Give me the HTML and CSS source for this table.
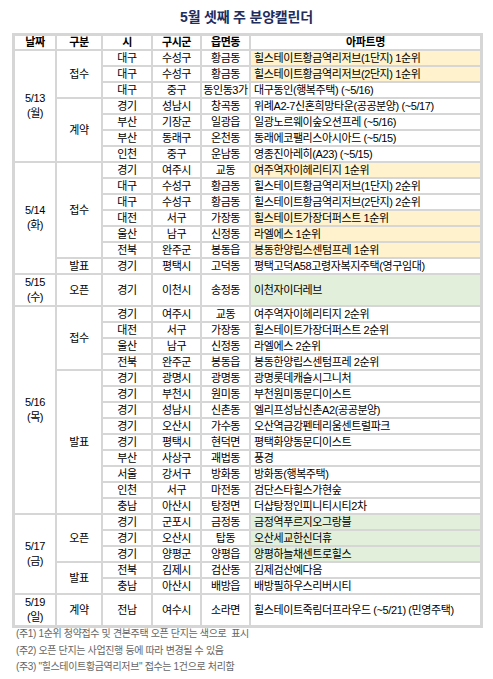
FILE: index.html
```html
<!DOCTYPE html>
<html lang="ko">
<head>
<meta charset="utf-8">
<title>5월 셋째 주 분양캘린더</title>
<link rel="stylesheet" href="styles.css">
</head>
<body>
<h1 class="title">5월 셋째 주 분양캘린더</h1>
<table class="cal">
<colgroup>
<col class="c-date"><col class="c-kind"><col class="c-si"><col class="c-gu"><col class="c-dong"><col class="c-name">
</colgroup>
<thead>
<tr><th>날짜</th><th>구분</th><th>시</th><th>구시군</th><th>읍면동</th><th>아파트명</th></tr>
</thead>
<tbody>
<tr><td class="date" rowspan="7">5/13<br>(월)</td><td rowspan="3">접수</td><td>대구</td><td>수성구</td><td>황금동</td><td class="name y">힐스테이트황금역리저브(1단지) 1순위</td></tr>
<tr><td>대구</td><td>수성구</td><td>황금동</td><td class="name y">힐스테이트황금역리저브(2단지) 1순위</td></tr>
<tr><td>대구</td><td>중구</td><td>동인동3가</td><td class="name">대구동인(행복주택) (~5/16)</td></tr>
<tr><td rowspan="4">계약</td><td>경기</td><td>성남시</td><td>창곡동</td><td class="name">위례A2-7신혼희망타운(공공분양) (~5/17)</td></tr>
<tr><td>부산</td><td>기장군</td><td>일광읍</td><td class="name">일광노르웨이숲오션프레 (~5/16)</td></tr>
<tr><td>부산</td><td>동래구</td><td>온천동</td><td class="name">동래에코팰리스아시아드 (~5/15)</td></tr>
<tr><td>인천</td><td>중구</td><td>운남동</td><td class="name">영종진아레히(A23) (~5/15)</td></tr>

<tr><td class="date" rowspan="7">5/14<br>(화)</td><td rowspan="6">접수</td><td>경기</td><td>여주시</td><td>교동</td><td class="name y">여주역자이헤리티지 1순위</td></tr>
<tr><td>대구</td><td>수성구</td><td>황금동</td><td class="name">힐스테이트황금역리저브(1단지) 2순위</td></tr>
<tr><td>대구</td><td>수성구</td><td>황금동</td><td class="name">힐스테이트황금역리저브(2단지) 2순위</td></tr>
<tr><td>대전</td><td>서구</td><td>가장동</td><td class="name y">힐스테이트가장더퍼스트 1순위</td></tr>
<tr><td>울산</td><td>남구</td><td>신정동</td><td class="name y">라엘에스 1순위</td></tr>
<tr><td>전북</td><td>완주군</td><td>봉동읍</td><td class="name y">봉동한양립스센텀프레 1순위</td></tr>
<tr><td>발표</td><td>경기</td><td>평택시</td><td>고덕동</td><td class="name">평택고덕A58고령자복지주택(영구임대)</td></tr>

<tr><td class="date">5/15<br>(수)</td><td>오픈</td><td>경기</td><td>이천시</td><td>송정동</td><td class="name g">이천자이더레브</td></tr>

<tr><td class="date" rowspan="13">5/16<br>(목)</td><td rowspan="4">접수</td><td>경기</td><td>여주시</td><td>교동</td><td class="name">여주역자이헤리티지 2순위</td></tr>
<tr><td>대전</td><td>서구</td><td>가장동</td><td class="name">힐스테이트가장더퍼스트 2순위</td></tr>
<tr><td>울산</td><td>남구</td><td>신정동</td><td class="name">라엘에스 2순위</td></tr>
<tr><td>전북</td><td>완주군</td><td>봉동읍</td><td class="name">봉동한양립스센텀프레 2순위</td></tr>
<tr><td rowspan="9">발표</td><td>경기</td><td>광명시</td><td>광명동</td><td class="name">광명롯데캐슬시그니처</td></tr>
<tr><td>경기</td><td>부천시</td><td>원미동</td><td class="name">부천원미동문디이스트</td></tr>
<tr><td>경기</td><td>성남시</td><td>신촌동</td><td class="name">엘리프성남신촌A2(공공분양)</td></tr>
<tr><td>경기</td><td>오산시</td><td>가수동</td><td class="name">오산역금강펜테리움센트럴파크</td></tr>
<tr><td>경기</td><td>평택시</td><td>현덕면</td><td class="name">평택화양동문디이스트</td></tr>
<tr><td>부산</td><td>사상구</td><td>괘법동</td><td class="name">풍경</td></tr>
<tr><td>서울</td><td>강서구</td><td>방화동</td><td class="name">방화동(행복주택)</td></tr>
<tr><td>인천</td><td>서구</td><td>마전동</td><td class="name">검단스타힐스가현숲</td></tr>
<tr><td>충남</td><td>아산시</td><td>탕정면</td><td class="name">더샵탕정인피니티시티2차</td></tr>

<tr><td class="date" rowspan="5">5/17<br>(금)</td><td rowspan="3">오픈</td><td>경기</td><td>군포시</td><td>금정동</td><td class="name g">금정역푸르지오그랑블</td></tr>
<tr><td>경기</td><td>오산시</td><td>탑동</td><td class="name g">오산세교한신더휴</td></tr>
<tr><td>경기</td><td>양평군</td><td>양평읍</td><td class="name g">양평하늘채센트로힐스</td></tr>
<tr><td rowspan="2">발표</td><td>전북</td><td>김제시</td><td>검산동</td><td class="name">김제검산예다음</td></tr>
<tr><td>충남</td><td>아산시</td><td>배방읍</td><td class="name">배방필하우스리버시티</td></tr>

<tr><td class="date">5/19<br>(일)</td><td>계약</td><td>전남</td><td>여수시</td><td>소라면</td><td class="name">힐스테이트죽림더프라우드 (~5/21) (민영주택)</td></tr>
</tbody>
</table>
<div class="notes">
<p>(주1) 1순위 청약접수 및 견본주택 오픈 단지는 색으로&nbsp; 표시</p>
<p>(주2) 오픈 단지는 사업진행 등에 따라 변경될 수 있음</p>
<p>(주3) "힐스테이트황금역리저브" 접수는 1건으로 처리함</p>
</div>
</body>
</html>
```
FILE: styles.css
```css
html, body {
  margin: 0;
  padding: 0;
  background: #ffffff;
}
body {
  font-family: "Liberation Sans", "Noto Sans CJK KR", sans-serif;
  color: #000;
}
.title {
  margin: 7px 0 6px;
  text-align: center;
  font-size: 14px;
  line-height: 20px;
  font-weight: 700;
  color: #1f2d5c;
  letter-spacing: -0.2px;
}
.cal {
  margin-left: 12px;
  width: 471px;
  table-layout: fixed;
  border-collapse: separate;
  border-spacing: 2px;
  border: 1px solid #d6d6d6;
  background: #d6d6d6;
  font-size: 11px;
  letter-spacing: -0.4px;
}
.c-date { width: 40px; }
.c-kind { width: 44px; }
.c-si { width: 48px; }
.c-gu { width: 47px; }
.c-dong { width: 47px; }
.cal th,
.cal td {
  background: #fff;
  padding: 0;
  height: 14px;
  line-height: 14px;
  text-align: center;
  vertical-align: middle;
  white-space: nowrap;
  overflow: hidden;
}
.cal th {
  height: 13px;
  line-height: 13px;
  font-weight: 700;
}
.cal td.date {
  line-height: 15px;
}
.cal td.name {
  text-align: left;
  padding-left: 3px;
}
.cal td.y { background: #fff2cc; }
.cal td.g { background: #e2efda; }
.notes {
  margin: 0 0 0 16px;
  display: flex;
  flex-direction: column;
  gap: 4.5px;
  font-size: 10px;
  line-height: 12px;
  letter-spacing: -0.35px;
  color: #666;
}
.notes p {
  margin: 0;
}
```
